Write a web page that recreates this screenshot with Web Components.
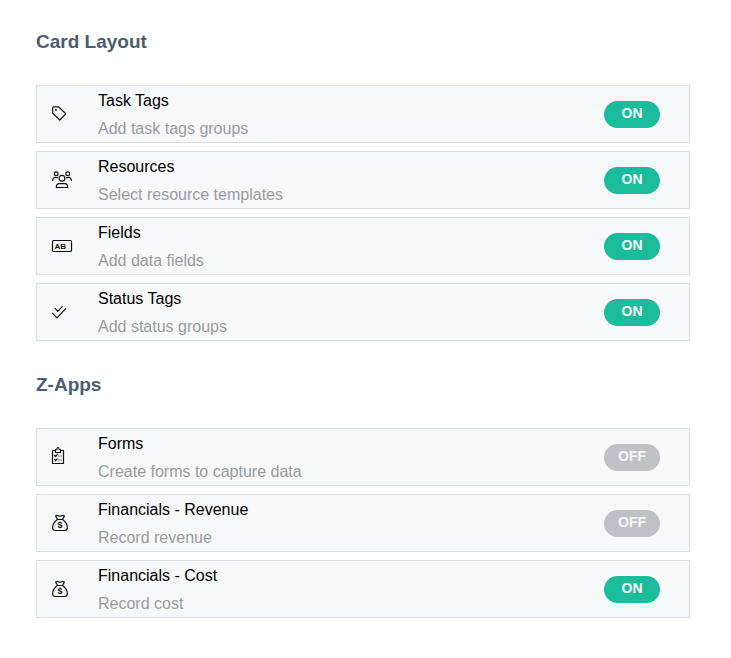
<!DOCTYPE html>
<html lang="en">
<head>
<meta charset="utf-8">
<meta name="viewport" content="width=device-width, initial-scale=1">
<title>Card Layout</title>
<style>
    body {
        margin: 0;
        background: #fff;
        font-family: Arial, "Liberation Sans", sans-serif;
        font-size: 16px;
    }
</style>
</head>
<body>
<settings-page>
    <settings-section heading="Card Layout">
        <setting-row icon="tag" label="Task Tags" description="Add task tags groups" on></setting-row>
        <setting-row icon="people" label="Resources" description="Select resource templates" on></setting-row>
        <setting-row icon="fields" label="Fields" description="Add data fields" on></setting-row>
        <setting-row icon="checks" label="Status Tags" description="Add status groups" on></setting-row>
    </settings-section>
    <settings-section heading="Z-Apps">
        <setting-row icon="form" label="Forms" description="Create forms to capture data"></setting-row>
        <setting-row icon="money" label="Financials - Revenue" description="Record revenue"></setting-row>
        <setting-row icon="money" label="Financials - Cost" description="Record cost" on></setting-row>
    </settings-section>
</settings-page>

<script>
const ICONS = {
    tag: `
        <path d="M1.5 2.8h5l7.3 7-6 6.2-7.1-6.8V3.6z" />
        <circle cx="3.9" cy="6" r=".4" />`,
    people: `
        <circle cx="4.2" cy="3.8" r="1.9" />
        <circle cx="15.8" cy="3.8" r="1.9" />
        <circle cx="10" cy="8.3" r="2.9" />
        <path d="M.6 10.4c0-2 1.3-3 3-3 .8 0 1.4.1 1.9.4M19.4 10.4c0-2-1.3-3-3-3-.8 0-1.4.1-1.9.4M4.4 17.5v-1c0-1.6 1.2-2.9 2.8-2.9h5.6c1.6 0 2.8 1.3 2.8 2.9v1z" />`,
    fields: `
        <rect x=".5" y="4.5" width="19" height="11" rx="1" />
        <text x="2.4" y="13" font-size="8">AB</text>`,
    checks: `
        <path d="M3 6.4l2.8 2.9 4.4-4.6M.6 11.3l4.3 4.5 8.8-9.2" />`,
    form: `
        <path d="M3.5 3.5h-3v13h11v-13h-3M3.5 5.5v-3h1.3c0-2.7 2.4-2.7 2.4 0h1.3v3z" />
        <path d="M2.5 8.5l1 1 2-2.2M2.5 12.5l1 1 1.6-1.6" />
        <path d="M6.5 9h3M6.5 13h3" stroke="#777" />`,
    money: `
        <path d="M5.4 6.3L3.6 2.9c1-.8 1.8-.7 2.6-.2 1.1.7 2.2.7 3.4 0 .9-.5 1.8-.6 2.8.2l-1.8 3.4M5.4 6.5h5.2c2.8 2.1 4.8 4.9 4.8 8 0 1.9-1 3-2.8 3H3.4c-1.8 0-2.8-1.1-2.8-3 0-3.1 2-5.9 4.8-8z" />
        <text x="5.5" y="15" font-size="9">$</text>`
};

class SettingsPage extends HTMLElement {
    constructor() {
        super();
        this.attachShadow({ mode: 'open' });
        this.shadowRoot.innerHTML = `
            <style>
                :host {
                    display: block;
                }
                main {
                    display: flex;
                    flex-direction: column;
                    gap: 29px;
                    padding: 27px 41px 39px 36px;
                }
            </style>
            <main><slot></slot></main>
        `;
    }
}

class SettingsSection extends HTMLElement {
    constructor() {
        super();
        this.attachShadow({ mode: 'open' });
        this.shadowRoot.innerHTML = `
            <style>
                :host {
                    display: block;
                }
                h2 {
                    margin: 0 0 28px;
                    color: #4c5d70;
                    font-size: 19px;
                    line-height: 30px;
                    font-weight: bold;
                }
                .rows {
                    display: flex;
                    flex-direction: column;
                    gap: 8px;
                }
            </style>
            <section>
                <h2></h2>
                <div class="rows"><slot></slot></div>
            </section>
        `;
    }

    connectedCallback() {
        this.shadowRoot.querySelector('h2').textContent = this.getAttribute('heading');
    }
}

class SettingIcon extends HTMLElement {
    constructor() {
        super();
        this.attachShadow({ mode: 'open' });
    }

    connectedCallback() {
        this.shadowRoot.innerHTML = `
            <style>
                :host {
                    display: block;
                }
                svg {
                    display: block;
                    overflow: visible;
                    fill: none;
                    stroke: #111;
                    stroke-width: 1.2;
                    stroke-linejoin: round;
                    stroke-linecap: round;
                }
                text {
                    fill: #111;
                    stroke: none;
                    font-weight: bold;
                }
            </style>
            <svg width="20" height="20" viewBox="0 0 20 20" aria-hidden="true">${ICONS[this.getAttribute('name')]}</svg>
        `;
    }
}

class ToggleSwitch extends HTMLElement {
    static observedAttributes = ['on', 'label'];

    constructor() {
        super();
        this.attachShadow({ mode: 'open' });
        this.shadowRoot.innerHTML = `
            <style>
                :host {
                    display: block;
                }
                button {
                    display: block;
                    width: 56px;
                    height: 27px;
                    margin: 0;
                    padding: 0 0 2px;
                    border: 0;
                    border-radius: 14px;
                    background: #c0c1c7;
                    color: #f7f8fa;
                    font: bold 14px/25px Arial, "Liberation Sans", sans-serif;
                    text-align: center;
                    cursor: pointer;
                }
                button[aria-checked="true"] {
                    background: #1bbc9b;
                }
            </style>
            <button type="button" role="switch"></button>
        `;
        this.button = this.shadowRoot.querySelector('button');
        this.button.addEventListener('click', () => this.toggleAttribute('on'));
    }

    connectedCallback() {
        this.update();
    }

    attributeChangedCallback() {
        this.update();
    }

    update() {
        const on = this.hasAttribute('on');
        this.button.textContent = on ? 'ON' : 'OFF';
        this.button.setAttribute('aria-checked', on);
        this.button.setAttribute('aria-label', this.getAttribute('label') || '');
    }
}

class SettingRow extends HTMLElement {
    constructor() {
        super();
        this.attachShadow({ mode: 'open' });
    }

    connectedCallback() {
        this.shadowRoot.innerHTML = `
            <style>
                :host {
                    display: flex;
                    align-items: center;
                    padding: 0 29px 0 15px;
                    border: 1px solid #d9dde1;
                    background: #f6f8fa;
                }
                setting-icon {
                    flex: none;
                    width: 46px;
                }
                .text {
                    flex: 1;
                    min-width: 0;
                }
                .label {
                    color: #000;
                    line-height: 30px;
                }
                .description {
                    color: #969ca3;
                    line-height: 26px;
                }
            </style>
            <setting-icon name="${this.getAttribute('icon')}"></setting-icon>
            <div class="text">
                <div class="label">${this.getAttribute('label')}</div>
                <div class="description">${this.getAttribute('description')}</div>
            </div>
            <toggle-switch label="${this.getAttribute('label')}" ${this.hasAttribute('on') ? 'on' : ''}></toggle-switch>
        `;
    }
}

customElements.define('setting-icon', SettingIcon);
customElements.define('toggle-switch', ToggleSwitch);
customElements.define('setting-row', SettingRow);
customElements.define('settings-section', SettingsSection);
customElements.define('settings-page', SettingsPage);
</script>
</body>
</html>
